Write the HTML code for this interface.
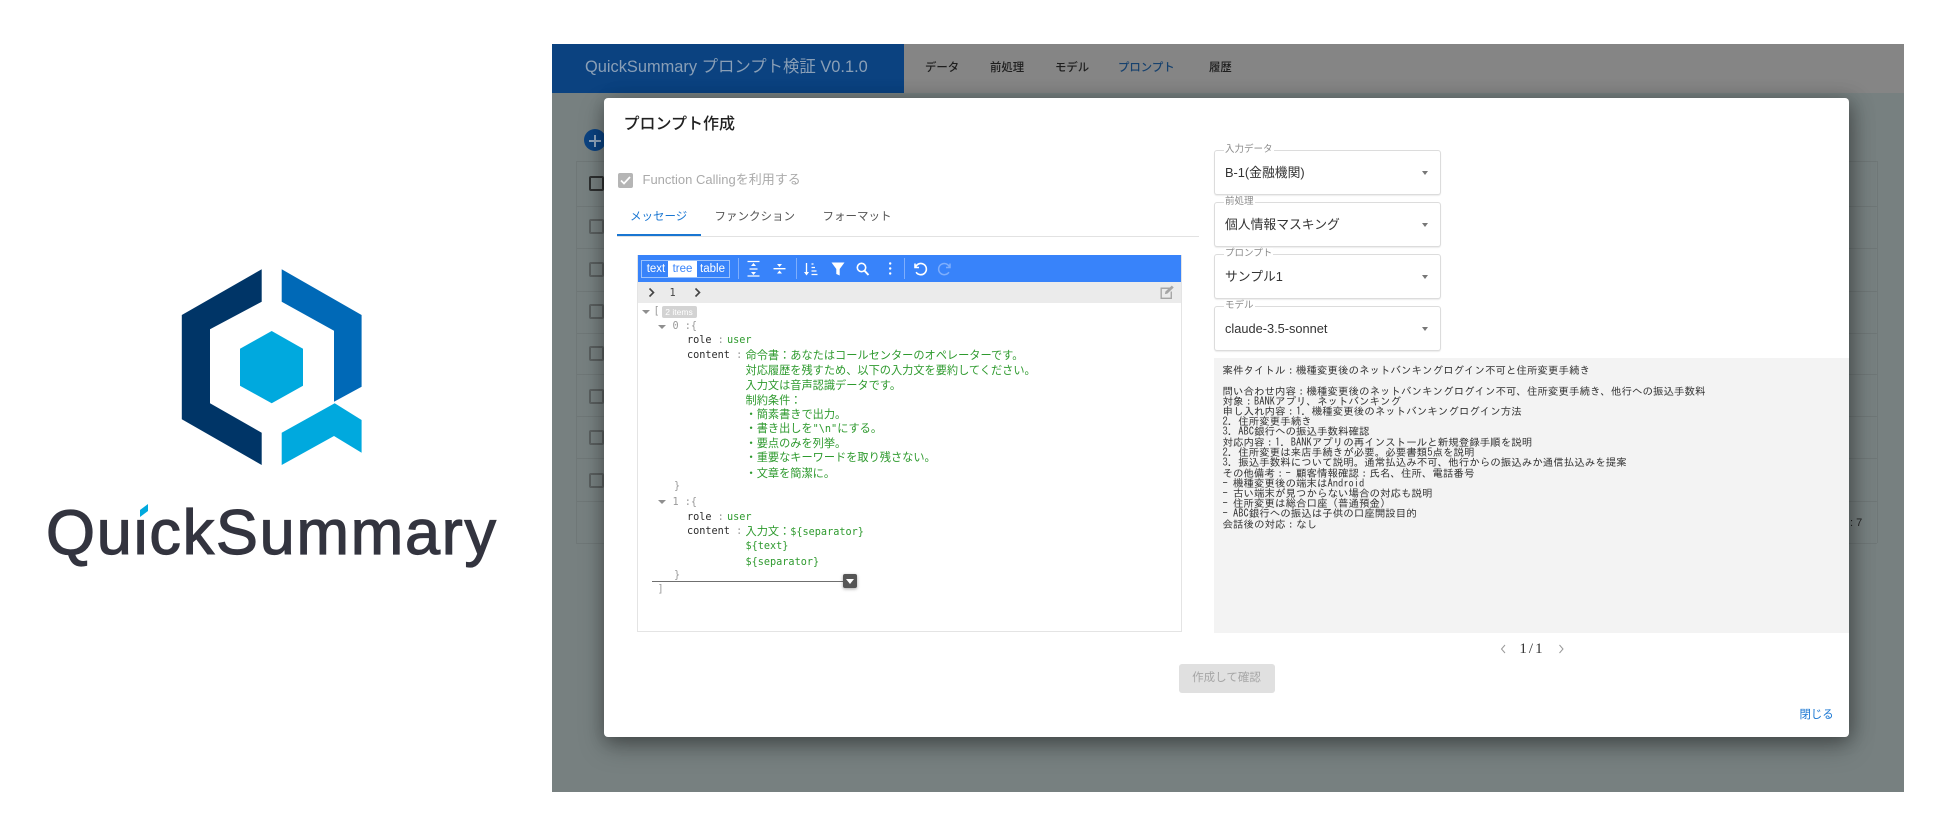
<!DOCTYPE html>
<html lang="ja"><head><meta charset="utf-8"><title>QuickSummary</title>
<style>
*{box-sizing:border-box}
html,body{margin:0;padding:0;width:1950px;height:836px;overflow:hidden;background:#fff}
body{font-family:"Liberation Sans","Noto Sans CJK JP",sans-serif;color:#222}
#root{position:absolute;left:0;top:0;width:1950px;height:836px;filter:blur(.35px);overflow:hidden}
.a{position:absolute;white-space:nowrap}
.row{position:absolute;left:576px;width:1301px;border-top:1px solid #6f7777}
.cb{position:absolute;left:589px;width:15px;height:15px;border:2px solid #5a5f5f;border-radius:2px}
.sel{position:absolute;left:610px;width:226.5px;height:44.5px;border:1px solid #dcdcdc;border-radius:3px;background:#fff;box-shadow:0 1px 1px rgba(0,0,0,.08)}
.sel .t{position:absolute;left:10px;top:13px;font-size:12.8px;line-height:18px;color:#333;white-space:nowrap}
.sel .lb{position:absolute;left:9px;top:-7px;font-size:9.5px;line-height:12px;color:#8a8a8a;background:#fff;padding:0 1px;white-space:nowrap}
.sel i{position:absolute;left:207px;top:20px;width:0;height:0;border:3.5px solid transparent;border-top:4px solid #777;border-bottom:0}
.j{position:absolute;white-space:pre;font:10.2px/14px "DejaVu Sans Mono","Liberation Mono",monospace;color:#2b2b2b}
.g{color:#9a9a9a}
.v{position:absolute;left:108px;white-space:pre;font:11.2px/14px "Noto Sans CJK JP","DejaVu Sans Mono",monospace;color:#2e9a2e}
.v b{font:10.2px/14px "DejaVu Sans Mono",monospace;color:#2e9a2e}
.u{color:#2e9a2e}
.p{position:absolute;left:8.5px;white-space:pre;font:10.5px/11px "IPAGothic","Liberation Mono",monospace;color:#333}
</style></head>
<body><div id="root">

<svg class="a" style="left:0;top:230px" width="540" height="370" viewBox="0 230 540 370">
<polygon fill="#003567" points="261.7,269.3 181.8,315 181.8,419.3 261.7,465 261.7,432.7 210,403.3 210,329.3 261.7,301.7"/>
<polygon fill="#0069b7" points="281.7,269.3 361.6,315 361.6,386.7 334,401.7 334,330.7 281.7,301.7"/>
<polygon fill="#00a9de" points="271.7,331 303,348.7 303,385.7 271.7,403.3 240,385.7 240,348.7"/>
<polygon fill="#00a9de" points="281.7,432.7 334.7,403.3 361.6,420 361.6,452.7 334,436 281.7,465"/>
<text x="46" y="554" font-family="'Liberation Sans',sans-serif" font-size="63" textLength="450" lengthAdjust="spacing" fill="#33343f" stroke="#33343f" stroke-width="1.2">QuickSummary</text>
<rect x="135" y="500" width="16" height="19" fill="#fff"/>
<polygon fill="#00a9de" points="140,510 148,504 148,511 140,517"/>
</svg>

<!-- app behind the scrim -->
<div class="a" style="left:552px;top:44px;width:1352px;height:748px;background:#778080"></div>
<div class="a" style="left:552px;top:44px;width:1352px;height:49px;background:#858585"></div>
<div class="a" style="left:552px;top:44px;width:352px;height:49px;background:#0b4280"></div>
<div class="a" style="left:585px;top:56px;font-size:16.4px;line-height:22px;color:#8a9fb6;width:283px">QuickSummary プロンプト検証 V0.1.0</div>
<div class="a" style="left:925px;top:60px;font-size:11.4px;line-height:17px;font-weight:500;color:#1e1e1e">データ</div>
<div class="a" style="left:990px;top:60px;font-size:11.4px;line-height:17px;font-weight:500;color:#1e1e1e">前処理</div>
<div class="a" style="left:1055px;top:60px;font-size:11.4px;line-height:17px;font-weight:500;color:#1e1e1e">モデル</div>
<div class="a" style="left:1118px;top:60px;font-size:11.4px;line-height:17px;font-weight:500;color:#16416e">プロンプト</div>
<div class="a" style="left:1209px;top:60px;font-size:11.4px;line-height:17px;font-weight:500;color:#1e1e1e">履歴</div>
<div class="a" style="left:584px;top:129px;width:22px;height:22px;border-radius:50%;background:#0b4280"></div>
<div class="a" style="left:589px;top:139.5px;width:12px;height:2px;background:#8fa5bd"></div>
<div class="a" style="left:594px;top:134.5px;width:2px;height:12px;background:#8fa5bd"></div>

<div class="a" style="left:576px;top:161px;width:301px;height:382px;border-left:1px solid #6f7777"></div>
<div class="a" style="left:1877px;top:161px;width:1px;height:382px;background:#6f7777"></div>
<div class="row" style="top:161px"></div><div class="row" style="top:206px"></div><div class="row" style="top:248px"></div><div class="row" style="top:291px"></div><div class="row" style="top:333px"></div><div class="row" style="top:374px"></div><div class="row" style="top:416px"></div><div class="row" style="top:458px"></div><div class="row" style="top:501px"></div><div class="row" style="top:543px"></div>
<div class="cb" style="top:176px;border-color:#2e3030"></div><div class="cb" style="top:219px"></div><div class="cb" style="top:262px"></div><div class="cb" style="top:304px"></div><div class="cb" style="top:346px"></div><div class="cb" style="top:389px"></div><div class="cb" style="top:430px"></div><div class="cb" style="top:473px"></div>
<div class="a" style="left:1850px;top:516px;font-size:11px;line-height:14px;color:#222">: 7</div>

<!-- modal -->
<div class="a" style="left:604px;top:98px;width:1245px;height:639px;background:#fff;border-radius:4px;overflow:hidden;box-shadow:0 10px 26px rgba(0,0,0,.26),0 4px 16px rgba(0,0,0,.2),8px 0 22px rgba(0,0,0,.12)">

<div class="a" style="left:19.5px;top:15px;font-size:16px;line-height:24px;font-weight:500;color:#222">プロンプト作成</div>

<div class="a" style="left:14px;top:75px;width:14.5px;height:14.5px;background:#b5b5b5;border-radius:2px"></div>
<svg class="a" style="left:14px;top:75px" width="15" height="15" viewBox="0 0 15 15"><path d="M3 7.5l3 3 6-6.5" fill="none" stroke="#fff" stroke-width="1.7"/></svg>
<div class="a" style="left:38.5px;top:72px;font-size:13px;line-height:19px;color:#aaa">Function Callingを利用する</div>

<div class="a" style="left:26px;top:111px;font-size:11.5px;line-height:17px;color:#1976d2">メッセージ</div>
<div class="a" style="left:110.5px;top:111px;font-size:11.5px;line-height:17px;color:#555">ファンクション</div>
<div class="a" style="left:218.5px;top:111px;font-size:11.5px;line-height:17px;color:#555">フォーマット</div>
<div class="a" style="left:13px;top:138px;width:582px;height:1px;background:#e2e2e2"></div>
<div class="a" style="left:13px;top:136px;width:84px;height:2px;background:#1976d2"></div>

<!-- JSON editor -->
<div class="a" style="left:32.5px;top:157px;width:545px;height:377px;border:1px solid #e4e4e4;border-top:0;background:#fff;overflow:hidden">
  <div class="a" style="left:-1px;top:0;width:547px;height:27px;background:#3883fa"></div>
  <div class="a" style="left:-1px;top:27px;width:547px;height:21px;background:#ebebeb"></div>

  <div class="a" style="left:3.2px;top:5px;width:89px;height:18px;border:1px solid #9cc2fb"></div>
  <div class="a" style="left:30.8px;top:6px;width:28.7px;height:16px;background:#fff"></div>
  <div class="a" style="left:6px;top:6px;width:25px;text-align:center;font-size:11.5px;line-height:16px;color:#fff">text</div>
  <div class="a" style="left:31px;top:6px;width:28px;text-align:center;font-size:11.5px;line-height:16px;color:#3883fa">tree</div>
  <div class="a" style="left:59px;top:6px;width:32px;text-align:center;font-size:11.5px;line-height:16px;color:#fff">table</div>

  <svg class="a" style="left:0;top:0" width="330" height="48" viewBox="636.5 255 330 48">
    <g stroke="#7eaefc" stroke-width="1"><path d="M737 258v21M795 258v21M903 258v21"/></g>
    <g fill="none" stroke="#fff" stroke-width="1.3">
      <path d="M746 261.5h12M746 276h12M748 269h8"/>
      <path d="M772 268.7h12"/>
      <path d="M805 263v10"/>
      <path d="M810 264h2M810 267.5h3.5M810 271h5M810 274.5h6"/>
      <circle cx="860" cy="267.5" r="4.2" stroke-width="1.6"/>
      <path d="M863 270.7l4 4.3" stroke-width="1.9"/>
      <path d="M913.5 263.5v4h4M914 267.2a5.6 5.6 0 1 1 .6 5" stroke-width="1.6"/>
    </g>
    <g fill="#fff">
      <path d="M752 263l-2.5 3h5zM752 275l-2.5-3h5z"/>
      <path d="M778 267l-2.5-3h5zM778 270.5l-2.5 3h5z"/>
      <path d="M802.5 272h5l-2.5 3.5z"/>
      <path d="M830 262.5h13l-4.8 6.5v6.5l-3.4-1.5v-5z"/>
      <circle cx="888.7" cy="263.5" r="1.2"/><circle cx="888.7" cy="268.5" r="1.2"/><circle cx="888.7" cy="273.5" r="1.2"/>
    </g>
    <path d="M948.5 263.5v4h-4M948 267.2a5.6 5.6 0 1 0-.6 5" fill="none" stroke="#7eaefc" stroke-width="1.5"/>
    <g fill="none" stroke="#444" stroke-width="1.6"><path d="M648 288.5l4 4-4 4M694 288.5l4 4-4 4"/></g>
  </svg>
  <div class="j" style="left:32px;top:31.5px;color:#444">1</div>
  <svg class="a" style="left:520px;top:29px" width="17" height="17" viewBox="0 0 16 16"><path d="M12 4H3v9.5h9.5V7" fill="none" stroke="#a5a5a5" stroke-width="1.3"/><path d="M6.5 9.5l.5-2.5 6-5.500 1.800 1.800-6 5.800z" fill="#a5a5a5"/></svg>

  <svg class="a" style="left:0;top:48px" width="40" height="260" viewBox="0 0 40 260">
    <path d="M4 7h8l-4 4zM20 22h8l-4 4zM20 197h8l-4 4z" fill="#8f8f8f"/>
  </svg>
  <div class="j g" style="left:16px;top:50px">[</div>
  <div class="a" style="left:24px;top:51px;width:35px;height:12px;background:#d3d3d3;border-radius:2px;color:#fff;font-size:8.5px;line-height:12px;text-align:center">2 items</div>
  <div class="j g" style="left:35px;top:65px">0 :{</div>
  <div class="j" style="left:49.5px;top:79px">role <span class="g">:</span></div>
  <div class="j u" style="left:89.5px;top:79px">user</div>
  <div class="j" style="left:49.5px;top:94px">content <span class="g">:</span></div>
  <div class="v" style="top:92.5px">命令書&#xFF1A;あなたはコールセンターのオペレーターです。</div>
  <div class="v" style="top:108px">対応履歴を残すため、以下の入力文を要約してください。</div>
  <div class="v" style="top:122.5px">入力文は音声認識データです。</div>
  <div class="v" style="top:137.5px">制約条件&#xFF1A;</div>
  <div class="v" style="top:151.7px">・簡素書きで出力。</div>
  <div class="v" style="top:166px">・書き出しを<b>"\n"</b>にする。</div>
  <div class="v" style="top:180.5px">・要点のみを列挙。</div>
  <div class="v" style="top:195px">・重要なキーワードを取り残さない。</div>
  <div class="v" style="top:210.5px">・文章を簡潔に。</div>
  <div class="j g" style="left:36.5px;top:225px">}</div>
  <div class="j g" style="left:35px;top:241px">1 :{</div>
  <div class="j" style="left:49.5px;top:256px">role <span class="g">:</span></div>
  <div class="j u" style="left:89.5px;top:256px">user</div>
  <div class="j" style="left:49.5px;top:270px">content <span class="g">:</span></div>
  <div class="v" style="top:268.5px">入力文&#xFF1A;<b>${separator}</b></div>
  <div class="v" style="top:283px"><b>${text}</b></div>
  <div class="v" style="top:298.5px"><b>${separator}</b></div>
  <div class="j g" style="left:36.5px;top:314px">}</div>
  <div class="j g" style="left:20px;top:328px">]</div>
  <div class="a" style="left:14.5px;top:325.5px;width:194px;height:1.5px;background:#6f6f6f"></div>
  <div class="a" style="left:205.5px;top:319px;width:14px;height:14px;background:#555;border-radius:2px;box-shadow:0 1px 3px rgba(0,0,0,.35)"></div>
  <div class="a" style="left:208.5px;top:324px;width:0;height:0;border:4px solid transparent;border-top:5px solid #fff;border-bottom:0"></div>
</div>

<!-- selects -->
<div class="sel" style="top:52px"><div class="lb">入力データ</div><div class="t">B-1(金融機関)</div><i></i></div>
<div class="sel" style="top:104px"><div class="lb">前処理</div><div class="t">個人情報マスキング</div><i></i></div>
<div class="sel" style="top:156px"><div class="lb">プロンプト</div><div class="t">サンプル1</div><i></i></div>
<div class="sel" style="top:208px"><div class="lb">モデル</div><div class="t">claude-3.5-sonnet</div><i></i></div>

<!-- response panel -->
<div class="a" style="left:610px;top:260px;width:635px;height:275px;background:#f3f3f3">
  <div class="p" style="top:7.5px">案件タイトル&#xFF1A;機種変更後のネットバンキングログイン不可と住所変更手続き</div>
  <div class="p" style="top:28.5px">問い合わせ内容&#xFF1A;機種変更後のネットバンキングログイン不可、住所変更手続き、他行への振込手数料</div>
  <div class="p" style="top:38.8px">対象&#xFF1A;BANKアプリ、ネットバンキング</div>
  <div class="p" style="top:49px">申し入れ内容&#xFF1A;1. 機種変更後のネットバンキングログイン方法</div>
  <div class="p" style="top:59.2px">2. 住所変更手続き</div>
  <div class="p" style="top:69.3px">3. ABC銀行への振込手数料確認</div>
  <div class="p" style="top:79.8px">対応内容&#xFF1A;1. BANKアプリの再インストールと新規登録手順を説明</div>
  <div class="p" style="top:90px">2. 住所変更は来店手続きが必要。必要書類5点を説明</div>
  <div class="p" style="top:100.4px">3. 振込手数料について説明。通常払込み不可、他行からの振込みか通信払込みを提案</div>
  <div class="p" style="top:110.7px">その他備考&#xFF1A;- 顧客情報確認&#xFF1A;氏名、住所、電話番号</div>
  <div class="p" style="top:120.9px">- 機種変更後の端末はAndroid</div>
  <div class="p" style="top:131px">- 古い端末が見つからない場合の対応も説明</div>
  <div class="p" style="top:141.2px">- 住所変更は総合口座&#xFF08;普通預金&#xFF09;</div>
  <div class="p" style="top:151.3px">- ABC銀行への振込は子供の口座開設目的</div>
  <div class="p" style="top:161.5px">会話後の対応&#xFF1A;なし</div>
</div>

<svg class="a" style="left:894px;top:543px" width="70" height="16" viewBox="0 0 70 16"><path d="M7 4L3.5 8 7 12M61.5 4L65 8l-3.5 4" fill="none" stroke="#999" stroke-width="1"/></svg>
<div class="a" style="left:909px;top:541px;width:38px;text-align:center;font:15px/20px 'Liberation Serif','DejaVu Serif',serif;color:#333;letter-spacing:2px">1/1</div>

<div class="a" style="left:574.5px;top:566px;width:96px;height:29px;background:#e0e0e0;border-radius:3px;text-align:center;font-size:11.5px;line-height:29px;color:#a6a6a6">作成して確認</div>
<div class="a" style="left:1195.5px;top:609px;font-size:11.4px;line-height:17px;color:#1976d2">閉じる</div>

</div>
</div></body></html>
